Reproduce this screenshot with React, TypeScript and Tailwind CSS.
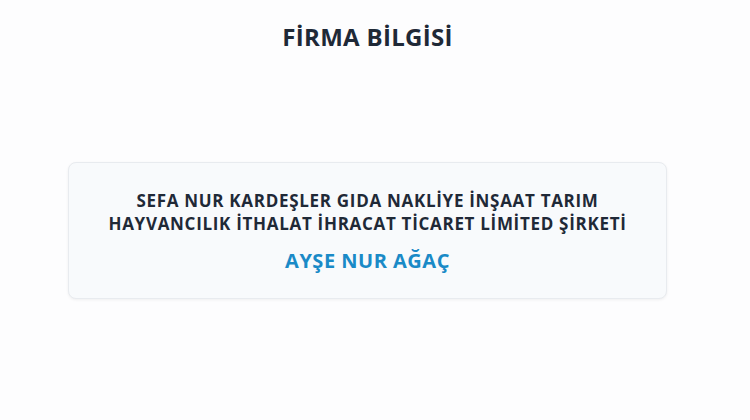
import React from 'react';

const company = {
  title: 'FİRMA BİLGİSİ',
  nameLines: ['SEFA NUR KARDEŞLER GIDA NAKLİYE İNŞAAT TARIM', 'HAYVANCILIK İTHALAT İHRACAT TİCARET LİMİTED ŞİRKETİ'],
  owner: 'AYŞE NUR AĞAÇ',
};

const App: React.FC = () => {
  return (
    <div className="min-h-[420px] w-full bg-[#fdfdfe] pr-[15px] font-['Open_Sans',sans-serif]">
      <div className="flex flex-col items-center pt-[22px]">
        <h1 className="text-[24px] font-bold leading-[30px] tracking-[0.3px] text-[#1f2937]">{company.title}</h1>
      </div>
      <div className="mx-[68px] mt-[110px] rounded-lg border border-[#e8ebef] bg-[#f8fafc] px-4 pt-[26px] pb-[23px] text-center shadow-[0_1px_3px_rgba(0,0,0,0.06)]">
        <p className="text-[17px] font-bold leading-[23px] tracking-[0.7px] text-[#1f2937]">
          {company.nameLines[0]}
          <br />
          {company.nameLines[1]}
        </p>
        <p className="mt-[12px] text-[20px] font-bold leading-[28px] tracking-[0.5px] text-[#1a8ac7]">{company.owner}</p>
      </div>
    </div>
  );
};

export default App;
